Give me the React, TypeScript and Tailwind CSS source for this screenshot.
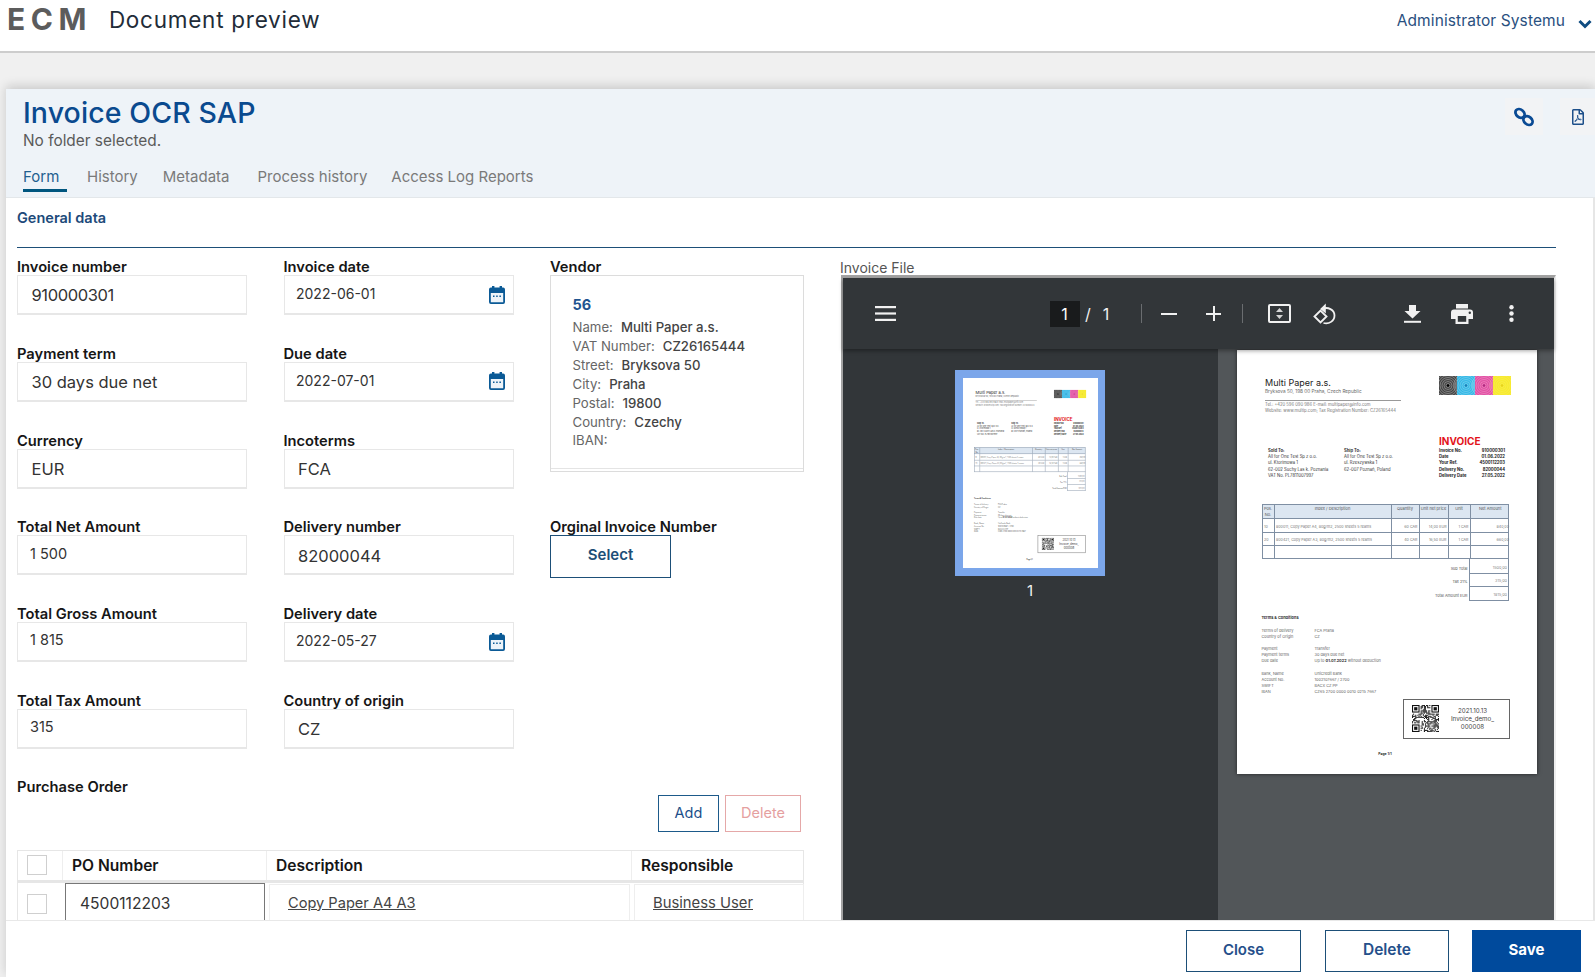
import React from "react";
import { FaRegFilePdf } from "react-icons/fa";

const Calendar = () => (
  <svg width="16" height="18" viewBox="0 0 16 18" className="shrink-0">
    <rect x="3" y="0" width="2.4" height="4" fill="#0b5a96" />
    <rect x="10.6" y="0" width="2.4" height="4" fill="#0b5a96" />
    <rect x="0.9" y="2.5" width="14.2" height="14.6" rx="1" fill="#eef4f9" stroke="#0b5a96" strokeWidth="1.8" />
    <rect x="1" y="2.5" width="14" height="4.5" fill="#0b5a96" />
    <rect x="4" y="9.5" width="1.5" height="1.5" fill="#0b5a96" />
    <rect x="7.2" y="9.5" width="1.5" height="1.5" fill="#0b5a96" />
    <rect x="10.4" y="9.5" width="1.5" height="1.5" fill="#0b5a96" />
  </svg>
);

const labelCls = "h-[16px] text-[14.7px] leading-[16px] font-semibold text-[#161616] whitespace-nowrap";

const Field = ({ label, value, small, date, tight }: { label: string; value: string; small?: boolean; date?: boolean; tight?: boolean }) => (
  <div>
    <div className={labelCls}>{label}</div>
    <div className="h-[40px] border border-[#e7e7e7] border-b-2 flex items-center justify-between pr-[8px]">
      {date ? (
        <span className="pl-[11.5px] pb-[2px] text-[14px] text-[#333]">{value}</span>
      ) : small ? (
        <span className="pl-[12px] pb-[3px] text-[14.5px] text-[#333]">{value}</span>
      ) : (
        <span className={"pl-[13.5px] pt-[2px] text-[16.5px] text-[#333] " + (tight ? "tracking-[-0.4px]" : "")}>{value}</span>
      )}
      {date ? <Calendar /> : null}
    </div>
  </div>
);

const VRow = ({ k, v }: { k: string; v?: string }) => (
  <div className="h-[19px] text-[13.2px] leading-[19px] whitespace-pre">
    <span className="text-[#666]">{k}</span>
    {v ? <span className="ml-[8px] text-[#444] font-medium">{v}</span> : null}
  </div>
);

const hash = (a: number, b: number) => {
  const s = Math.sin(a * 12.9898 + b * 78.233) * 43758.5453;
  return s - Math.floor(s) > 0.5;
};

const QR = ({ size }: { size: number }) => {
  const n = 25;
  const cells: React.ReactNode[] = [];
  const inFinder = (x: number, y: number) => (x < 8 && y < 8) || (x > 16 && y < 8) || (x < 8 && y > 16);
  for (let y = 0; y < n; y++) {
    for (let x = 0; x < n; x++) {
      if (!inFinder(x, y) && hash(x, y)) cells.push(<rect key={x + "-" + y} x={x} y={y} width="1" height="1" fill="#111" />);
    }
  }
  const F = ({ x, y }: { x: number; y: number }) => (
    <g>
      <rect x={x} y={y} width="7" height="7" fill="#111" />
      <rect x={x + 1} y={y + 1} width="5" height="5" fill="#fff" />
      <rect x={x + 2} y={y + 2} width="3" height="3" fill="#111" />
    </g>
  );
  return (
    <svg width={size} height={size} viewBox="0 0 25 25" className="shrink-0">
      {cells}
      <F x={0} y={0} />
      <F x={18} y={0} />
      <F x={0} y={18} />
    </svg>
  );
};

const ColorBars = () => {
  const cols = ["#444", "#35b8e6", "#e24fa3", "#f7ea2e"];
  return (
    <svg width="72" height="19" viewBox="0 0 72 19" className="shrink-0">
      {cols.map((c, i) => (
        <g key={c}>
          <rect x={i * 18} y="0" width="18" height="19" fill={c} />
          {[2, 4, 6, 8, 10, 12].map((r) => (
            <circle key={r} cx={i * 18 + 9} cy="9.5" r={r} fill="none" stroke={i === 0 ? "#999" : i === 3 ? "#f9f289" : "#ffffff"} strokeOpacity={i === 0 ? 0.9 : 0.3} strokeWidth="0.8" />
          ))}
          <circle cx={i * 18 + 9} cy="9.5" r="1.2" fill={i === 0 ? "#000" : i === 1 ? "#1a7fb5" : i === 2 ? "#b02a80" : "#e6d21c"} />
        </g>
      ))}
    </svg>
  );
};

const KV = ({ k, v }: { k: string; v: string }) => (
  <div className="flex h-[6.2px] leading-[6.2px]">
    <span className="w-[44px]">{k}</span>
    <span>{v}</span>
  </div>
);

const TH = ({ children, last }: { children: React.ReactNode; last?: boolean }) => (
  <div className={"text-center text-[4px] leading-[6px] pt-[1px] border-[#7f8fa3] " + (last ? "" : "border-r")}>{children}</div>
);
const TD = ({ children, right, last }: { children?: React.ReactNode; right?: boolean; last?: boolean }) => (
  <div className={"flex items-end pb-[2px] text-[3.7px] text-[#777] border-[#7f8fa3] whitespace-nowrap overflow-hidden " + (right ? "justify-end pr-[1px] " : "pl-[1.5px] ") + (last ? "" : "border-r")}>{children}</div>
);

const tableRow = "grid grid-cols-[12px_117px_28px_29px_22px_39.5px] border-b border-l border-r border-[#7f8fa3]";

const InvoicePage = () => (
  <div className="w-[300px] h-[424px] bg-white pt-[26px] pl-[24.5px] [font-family:'Liberation_Sans',sans-serif] text-[#222] overflow-hidden">
    <div className="flex h-[59px] w-[249.5px] justify-between">
      <div className="pl-[3.5px] pt-[2px]">
        <div className="text-[9px] leading-[10px] text-[#222]">Multi Paper a.s.</div>
        <div className="text-[4.7px] leading-[7px] text-[#666]">Bryksova 50, 198 00 Praha, Czech Republic</div>
        <div className="w-[136px] mt-[5px] border-t border-[#999] pt-[1px] text-[4.2px] leading-[6px] text-[#777] whitespace-nowrap">
          <div>Tel.: +420 596 090 986 E-mail: multipaper@info.com</div>
          <div>Website: www.multip.com; Tax Registration Number: CZ26165444</div>
        </div>
      </div>
      <ColorBars />
    </div>
    <div className="flex h-[69px] w-[248px]">
      <div className="w-[76px] ml-[6.5px] pt-[13px] text-[4.2px] leading-[6.2px] text-[#333]">
        <div className="font-bold">Sold To:</div>
        <div>All for One Test Sp z o.o.</div>
        <div>ul. Ktorimowa 1</div>
        <div>62-002 Suchy Las k. Poznania</div>
        <div>VAT No. PL7811007997</div>
      </div>
      <div className="w-[95px] pt-[13px] text-[4.2px] leading-[6.2px] text-[#333]">
        <div className="font-bold">Ship To:</div>
        <div>All for One Test Sp z o.o.</div>
        <div>ul. Rzeszywska 1</div>
        <div>62-007 Poznań, Poland</div>
      </div>
      <div className="w-[66px] text-[4.2px] font-bold text-[#222]">
        <div className="text-[10px] leading-[12px] text-[#e3131b]">INVOICE</div>
        <div className="mt-[1px]">
          <KV k="Invoice No." v="910000301" />
          <KV k="Date" v="01.06.2022" />
          <KV k="Your Ref." v="4500112203" />
          <KV k="Delivery No." v="82000044" />
          <KV k="Delivery Date" v="27.05.2022" />
        </div>
      </div>
    </div>
    <div className="w-[247.5px]">
      <div className={tableRow + " h-[15px] border-t bg-[#dce6f1] text-[#555]"}>
        <TH>Pos. No.</TH>
        <TH>Index / Description</TH>
        <TH>Quantity</TH>
        <TH>Unit net price</TH>
        <TH>Unit</TH>
        <TH last>Net Amount</TH>
      </div>
      <div className={tableRow + " h-[14px]"}>
        <TD>10</TD>
        <TD>800011, Copy Paper A4, 80g/m2, 2500 sheets 5 reams</TD>
        <TD right>60 CAR</TD>
        <TD right>14,00 EUR</TD>
        <TD right>1 CAR</TD>
        <TD right last>840,00</TD>
      </div>
      <div className={tableRow + " h-[13px]"}>
        <TD>20</TD>
        <TD>800421, Copy Paper A3, 80g/m2, 2500 sheets 5 reams</TD>
        <TD right>40 CAR</TD>
        <TD right>16,50 EUR</TD>
        <TD right>1 CAR</TD>
        <TD right last>660,00</TD>
      </div>
      <div className={tableRow + " h-[13px]"}>
        <TD />
        <TD />
        <TD />
        <TD />
        <TD />
        <TD last />
      </div>
      {[
        ["Sub Total", "1500,00", "h-[14.5px]"],
        ["Tax 21%", "315,00", "h-[13.5px]"],
        ["Total Amount EUR", "1815,00", "h-[14px]"],
      ].map(([a, b, h]) => (
        <div key={a} className={"flex justify-end text-[3.8px] " + h}>
          <div className="flex items-end pb-[2px] pr-[1.5px] text-[#555]">{a}</div>
          <div className="w-[40px] flex items-end pb-[2px] justify-end pr-[1px] border border-t-0 border-[#7f8fa3] text-[#888]">{b}</div>
        </div>
      ))}
    </div>
    <div className="mt-[14px] text-[3.9px] leading-[6.1px] text-[#666]">
      <div className="text-[#333] font-bold">Terms &amp; Conditions</div>
      <div className="mt-[7px]">
        {[
          ["Terms of delivery", "FCA Praha"],
          ["Country of Origin", "CZ"],
        ].map(([a, b]) => (
          <div key={a} className="flex"><span className="w-[53px]">{a}</span><span>{b}</span></div>
        ))}
      </div>
      <div className="mt-[6px]">
        {[
          ["Payment", "Transfer"],
          ["Payment terms", "30 days due net"],
        ].map(([a, b]) => (
          <div key={a} className="flex"><span className="w-[53px]">{a}</span><span>{b}</span></div>
        ))}
        <div className="flex"><span className="w-[53px]">Due date</span><span>Up to <b className="text-[#333]">01.07.2022</b> without deduction</span></div>
      </div>
      <div className="mt-[6px]">
        {[
          ["Bank, Name", "UniCredit Bank"],
          ["Account No.", "1002107667 / 2700"],
          ["SWIFT", "BACX CZ PP"],
          ["IBAN", "CZ65 2700 0000 0010 0215 7667"],
        ].map(([a, b]) => (
          <div key={a} className="flex"><span className="w-[53px]">{a}</span><span>{b}</span></div>
        ))}
      </div>
    </div>
    <div className="ml-[141.5px] mt-[4px] w-[107px] h-[40px] border border-[#666] flex items-center pl-[8px]">
      <QR size={27} />
      <div className="flex-1 text-center [font-family:'Liberation_Serif',serif] text-[6.2px] leading-[8px] text-[#444] pr-[3px]">
        <div>2021.10.13</div>
        <div>Invoice_demo_</div>
        <div>000008</div>
      </div>
    </div>
    <div className="w-[247px] mt-[13px] text-center text-[3.4px] font-bold text-[#333]">Page 1/1</div>
  </div>
);

const IconHamburger = () => (
  <svg width="21" height="15" viewBox="0 0 21 15" className="shrink-0">
    <rect y="0" width="21" height="2.2" fill="#f1f1f1" />
    <rect y="6.4" width="21" height="2.2" fill="#f1f1f1" />
    <rect y="12.8" width="21" height="2.2" fill="#f1f1f1" />
  </svg>
);
const IconFit = () => (
  <svg width="23" height="19" viewBox="0 0 23 19" className="shrink-0">
    <rect x="1" y="1" width="21" height="17" rx="1" fill="none" stroke="#f1f1f1" strokeWidth="2" />
    <path d="M11.5 4 L15 8 H8 Z M11.5 15 L8 11 H15 Z" fill="#d5d5d5" />
  </svg>
);
const IconRotate = () => (
  <svg width="23" height="22" viewBox="0 0 23 22" className="shrink-0">
    <path d="M8.5 6.2 C15 3 21.5 7 21.5 12.5 C21.5 18 16 21.5 10.5 20" fill="none" stroke="#f1f1f1" strokeWidth="1.8" />
    <path d="M12.8 0.6 L7.2 6 L12.8 10.4 Z" fill="#f1f1f1" />
    <path d="M7.5 7.6 L13.5 13.5 L7.5 19.4 L1.5 13.5 Z" fill="none" stroke="#f1f1f1" strokeWidth="1.9" />
  </svg>
);
const IconDownload = () => (
  <svg width="17" height="18" viewBox="0 0 17 18" className="shrink-0">
    <path d="M5 0 H12 V6 H16.5 L8.5 13.5 L0.5 6 H5 Z" fill="#f1f1f1" />
    <rect x="0" y="15.8" width="17" height="2" fill="#f1f1f1" />
  </svg>
);
const IconPrint = () => (
  <svg width="22" height="20" viewBox="0 0 22 20" className="shrink-0">
    <path d="M5 0 H17 V4.5 H5 Z" fill="#f1f1f1" />
    <path d="M3 5.5 H19 A3 3 0 0 1 22 8.5 V15 H17.5 V20 H4.5 V15 H0 V8.5 A3 3 0 0 1 3 5.5 Z" fill="#f1f1f1" />
    <rect x="6.8" y="12" width="8.4" height="5.8" fill="#323639" />
    <circle cx="18.8" cy="8.8" r="1.2" fill="#323639" />
  </svg>
);
const IconDots = () => (
  <svg width="5" height="17" viewBox="0 0 5 17" className="shrink-0">
    <circle cx="2.5" cy="2.3" r="2.2" fill="#f1f1f1" />
    <circle cx="2.5" cy="8.5" r="2.2" fill="#f1f1f1" />
    <circle cx="2.5" cy="14.7" r="2.2" fill="#f1f1f1" />
  </svg>
);

const Viewer = () => (
  <div className="w-[715px] shrink-0">
    <div className="h-[16px] text-[14px] leading-[18px] text-[#555] -ml-px">Invoice File</div>
    <div className="border-t-[3px] border-l-2 border-[#a3a3a3] border-r-2 border-r-[#eeeeee]">
      <div className="h-[71px] bg-[#323639] flex items-center pl-[32px] relative z-10 shadow-[0_2px_4px_rgba(0,0,0,0.35)] [font-family:'Liberation_Sans',sans-serif] text-[#f1f1f1] text-[16px]">
        <IconHamburger />
        <div className="ml-[154px] w-[30px] h-[26px] bg-[#191b1c] flex items-center justify-center text-[#fff] pr-[1px]">1</div>
        <span className="ml-[5px]">/</span>
        <span className="ml-[12px]">1</span>
        <div className="ml-[32px] w-px h-[19px] bg-[#6a6d70]" />
        <div className="ml-[19px] w-[16px] h-[2px] bg-[#f1f1f1]" />
        <div className="ml-[29px] w-[15px] h-[15px] flex items-center justify-center relative">
          <div className="w-[15px] h-[2px] bg-[#f1f1f1]" />
          <div className="absolute left-[6.5px] top-0 w-[2px] h-[15px] bg-[#f1f1f1]" />
        </div>
        <div className="ml-[21px] w-px h-[19px] bg-[#6a6d70]" />
        <div className="ml-[25px]"><IconFit /></div>
        <div className="ml-[22px]"><IconRotate /></div>
        <div className="ml-[68px]"><IconDownload /></div>
        <div className="ml-[30px]"><IconPrint /></div>
        <div className="ml-[36px]"><IconDots /></div>
      </div>
      <div className="flex h-[640px] [font-family:'Liberation_Sans',sans-serif]">
        <div className="w-[375px] bg-[#323639] pl-[112px] pt-[21px]">
          <div className="w-[150px] h-[206px] bg-[#7ba6ea] pl-[8px] pt-[8px]">
            <div className="w-[135px] h-[190px] overflow-hidden">
              <div className="origin-top-left scale-[0.45]">
                <InvoicePage />
              </div>
            </div>
          </div>
          <div className="w-[150px] text-center mt-[4px] text-[15px] text-[#f1f1f1]">1</div>
        </div>
        <div className="flex-1 bg-[#525659] pl-[19px] pt-px">
          <div className="w-[300px] shadow-[0_0_4px_rgba(0,0,0,0.6)]">
            <InvoicePage />
          </div>
        </div>
      </div>
    </div>
  </div>
);

const Check = () => <div className="w-[20px] h-[20px] border border-[#cfcfcf] bg-white" />;

export default function App() {
  return (
    <div className="w-[1595px] h-[977px] overflow-hidden flex flex-col bg-[#f0f0f0] [font-family:Inter,sans-serif]">
      <header className="h-[53px] shrink-0 bg-white border-b-2 border-[#cdcdcd] flex items-start pl-[7px]">
        <div className="mt-[1px] text-[30px] leading-[36px] font-bold tracking-[5.5px] text-[#5c5c5c]">ECM</div>
        <div className="ml-[17px] mt-[6px] text-[22.5px] leading-[28px] tracking-[0.75px] text-[#222c38]">Document preview</div>
        <div className="ml-auto mt-[12px] mr-[3px] flex items-center">
          <span className="text-[15.5px] leading-[18px] tracking-[0.1px] text-[#2a5080]">Administrator Systemu</span>
          <svg width="14" height="10" viewBox="0 0 14 10" className="ml-[13px] mt-[5px]">
            <path d="M1.5 2 L7 7.5 L12.5 2" fill="none" stroke="#0f4c81" strokeWidth="3" />
          </svg>
        </div>
      </header>
      <main className="mt-[36px] ml-[6px] flex-1 min-h-0 flex flex-col bg-white shadow-[0_-3px_10px_rgba(0,0,0,0.16)]">
        <section className="h-[109px] shrink-0 bg-[#eef3f8] border-b border-[#e3e7ea] pl-[17px] flex flex-col relative">
          <h1 className="mt-[7px] text-[28.5px] leading-[33px] tracking-[0.1px] font-medium text-[#0a4a8f]">Invoice OCR SAP</h1>
          <div className="mt-[3px] text-[15.4px] leading-[18px] text-[#5a5a5a]">No folder selected.</div>
          <nav className="mt-[18px] flex text-[15px] leading-[18px] text-[#7a7a7a]">
            <div className="w-[44px] h-[24px] border-b-[3px] border-[#00567f] text-[#1f5f8f]">Form</div>
            <div className="ml-[20px]">History</div>
            <div className="ml-[25px]">Metadata</div>
            <div className="ml-[28px]">Process history</div>
            <div className="ml-[24px]">Access Log Reports</div>
          </nav>
          <div className="absolute right-[52px] top-[9px] w-[38px] h-[37px] bg-[#f2f3f5] flex items-center justify-center">
            <svg width="22" height="20" viewBox="0 0 22 20">
              <ellipse cx="7" cy="6.4" rx="5" ry="3.8" transform="rotate(40 7 6.4)" fill="none" stroke="#0a4a94" strokeWidth="2.8" />
              <ellipse cx="15" cy="13.6" rx="5" ry="3.8" transform="rotate(40 15 13.6)" fill="none" stroke="#0a4a94" strokeWidth="2.8" />
            </svg>
          </div>
          <div className="absolute right-0 top-[9px] w-[35px] h-[37px] bg-[#f2f3f5] flex items-center pl-[10px] text-[#1d4f8a] text-[16px]">
            <FaRegFilePdf />
          </div>
        </section>
        <section className="flex-1 min-h-0 overflow-hidden pl-[11px] border-r-2 border-[#e6e6e6]">
          <div className="pt-[12px] h-[50px] w-[1539px] border-b-[1.5px] border-[#1d4f78] text-[14.5px] leading-[16px] font-semibold text-[#1d4a7a]">General data</div>
          <div className="mt-[11px] flex gap-[37px]">
            <div className="w-[787px] shrink-0">
              <div className="grid grid-cols-[230px_230px_254px] gap-x-[36.5px] grid-rows-[repeat(6,86.8px)]">
                <Field label="Invoice number" value="910000301" tight />
                <Field label="Invoice date" value="2022-06-01" date />
                <div className="row-span-3">
                  <div className={labelCls}>Vendor</div>
                  <div className="h-[197px] border border-[#dcdcdc] pl-[21.5px] pt-[18px] relative">
                    <div className="h-[24px] text-[14.5px] leading-[22px] font-bold text-[#1f5490]">56</div>
                    <VRow k="Name:" v="Multi Paper a.s." />
                    <VRow k="VAT Number:" v="CZ26165444" />
                    <VRow k="Street:" v="Bryksova 50" />
                    <VRow k="City:" v="Praha" />
                    <VRow k="Postal:" v="19800" />
                    <VRow k="Country:" v="Czechy" />
                    <div className="-mt-[1px]"><VRow k="IBAN:" /></div>
                    <div className="absolute left-0 right-0 bottom-[2px] border-b border-[#e4e4e4]" />
                  </div>
                </div>
                <Field label="Payment term" value="30 days due net" />
                <Field label="Due date" value="2022-07-01" date />
                <Field label="Currency" value="EUR" />
                <Field label="Incoterms" value="FCA" />
                <Field label="Total Net Amount" value="1 500" small />
                <Field label="Delivery number" value="82000044" />
                <div>
                  <div className={labelCls}>Orginal Invoice Number</div>
                  <button className="w-[121px] h-[43px] pb-[3px] border border-[#1d4f78] text-[15px] font-semibold text-[#1d4f78]">Select</button>
                </div>
                <Field label="Total Gross Amount" value="1 815" small />
                <Field label="Delivery date" value="2022-05-27" date />
                <div />
                <Field label="Total Tax Amount" value="315" small />
                <Field label="Country of origin" value="CZ" />
                <div />
              </div>
              <div className={"-mt-px " + labelCls}>Purchase Order</div>
              <div className="flex justify-end gap-[6px] pr-[3px]">
                <button className="w-[61px] h-[37px] border border-[#1d5a8a] text-[14.5px] text-[#1d4f8a]">Add</button>
                <button className="w-[76px] h-[37px] border border-[#e5a8a8] text-[14.5px] text-[#e5a0a0]">Delete</button>
              </div>
              <div className="mt-[18px] grid grid-cols-[45px_204px_365px_173px] h-[33px] border border-[#e6e6e6] border-b-[3px] text-[15.6px] font-semibold text-[#161616] items-center">
                <div className="pl-[9px] border-r border-[#eeeeee] h-full flex items-center"><Check /></div>
                <div className="pl-[9px] border-r border-[#eeeeee] h-full flex items-center">PO Number</div>
                <div className="pl-[9px] border-r border-[#eeeeee] h-full flex items-center">Description</div>
                <div className="pl-[9px] h-full flex items-center">Responsible</div>
              </div>
              <div className="grid grid-cols-[45px_204px_365px_173px] h-[60px] border-x border-[#e6e6e6]">
                <div className="pl-[9px] pt-[11px]"><Check /></div>
                <div className="pr-[2px] pl-[2px]">
                  <div className="h-[60px] border border-[#777] pl-[14px] pt-[9px] text-[15.6px] leading-[22px] text-[#333]">4500112203</div>
                </div>
                <div className="pl-[2px] pr-[2px] pt-px">
                  <div className="h-[60px] border border-[#eeeeee] pl-[18px] pt-[8px] text-[14.6px] leading-[20px] text-[#444] underline">Copy Paper A4 A3</div>
                </div>
                <div className="pl-[2px] pr-[1px] pt-px">
                  <div className="h-[60px] border border-[#eeeeee] pl-[18px] pt-[8px] text-[14.8px] leading-[20px] text-[#444] underline">Business User</div>
                </div>
              </div>
            </div>
            <Viewer />
          </div>
        </section>
        <footer className="h-[57px] shrink-0 border-t border-[#e8e8e8] bg-white flex justify-end items-start pt-[9px] pr-[14px] relative z-20">
          <button className="w-[115px] h-[42px] pb-[2px] border border-[#1d4f78] text-[15px] font-semibold text-[#254f8a]">Close</button>
          <button className="ml-[24px] w-[124px] h-[42px] pb-[2px] border border-[#1d4f78] text-[15.5px] font-semibold text-[#254f8a]">Delete</button>
          <button className="ml-[23px] w-[109px] h-[42px] pb-[2px] bg-[#004a9c] text-[15px] font-bold text-white">Save</button>
        </footer>
      </main>
    </div>
  );
}
